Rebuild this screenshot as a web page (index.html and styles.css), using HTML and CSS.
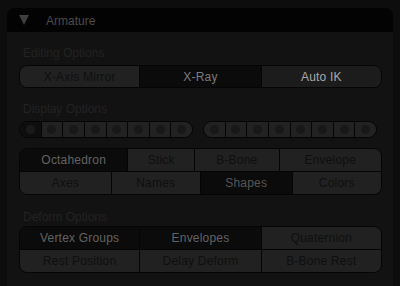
FILE: index.html
```html
<!DOCTYPE html>
<html lang="en">
<head>
    <meta charset="UTF-8">
    <title>Armature</title>
    <link rel="stylesheet" href="styles.css">
</head>
<body>
    <div class="panel">
        <div class="panel-header">
            <span class="tri"></span>
            <span class="title">Armature</span>
        </div>
        <div class="panel-body">
            <div class="label">Editing Options</div>
            <div class="btn-row grp">
                <div class="btn off w120">X-Axis Mirror</div>
                <div class="btn on bright w122">X-Ray</div>
                <div class="btn hot w121">Auto IK</div>
            </div>

            <div class="label">Display Options</div>
            <div class="layers-row">
                <div class="layers">
                    <div class="cell sel"><span class="dot"></span></div>
                    <div class="cell"><span class="dot"></span></div>
                    <div class="cell"><span class="dot"></span></div>
                    <div class="cell"><span class="dot"></span></div>
                    <div class="cell"><span class="dot"></span></div>
                    <div class="cell"><span class="dot"></span></div>
                    <div class="cell"><span class="dot"></span></div>
                    <div class="cell"><span class="dot"></span></div>
                </div>
                <div class="layers">
                    <div class="cell"><span class="dot"></span></div>
                    <div class="cell"><span class="dot"></span></div>
                    <div class="cell"><span class="dot"></span></div>
                    <div class="cell"><span class="dot"></span></div>
                    <div class="cell"><span class="dot"></span></div>
                    <div class="cell"><span class="dot"></span></div>
                    <div class="cell"><span class="dot"></span></div>
                    <div class="cell"><span class="dot"></span></div>
                </div>
            </div>

            <div class="grp block">
                <div class="btn-row">
                    <div class="btn on w108">Octahedron</div>
                    <div class="btn off w67">Stick</div>
                    <div class="btn off w85">B-Bone</div>
                    <div class="btn off w103">Envelope</div>
                </div>
                <div class="btn-row">
                    <div class="btn off w91">Axes</div>
                    <div class="btn off w90">Names</div>
                    <div class="btn on dim w92">Shapes</div>
                    <div class="btn off w90">Colors</div>
                </div>
            </div>

            <div class="label tight">Deform Options</div>
            <div class="grp block">
                <div class="btn-row">
                    <div class="btn on w120">Vertex Groups</div>
                    <div class="btn on w122">Envelopes</div>
                    <div class="btn off w121">Quaternion</div>
                </div>
                <div class="btn-row">
                    <div class="btn off w120">Rest Position</div>
                    <div class="btn off w122">Delay Deform</div>
                    <div class="btn off w121">B-Bone Rest</div>
                </div>
            </div>
        </div>
    </div>
</body>
</html>
```

FILE: styles.css
```css
body {
    margin: 0;
    background-color: #0d0d0d;
    font-family: "Liberation Sans", Arial, sans-serif;
    font-size: 12px;
    height: 286px;
    overflow: hidden;
}
.panel {
    margin: 8px 7px 0 7px;
    height: 278px;
    background-color: #121212;
    border-radius: 8px 8px 0 0;
}
.panel-header {
    height: 24px;
    background-color: #030303;
    border-radius: 8px 8px 0 0;
    display: flex;
    align-items: center;
}
.tri {
    width: 0;
    height: 0;
    margin-left: 12px;
    border-left: 5px solid transparent;
    border-right: 5px solid transparent;
    border-top: 10px solid #3e3e3e;
}
.title {
    margin-left: 17px;
    color: #4a4a4a;
    font-size: 12px;
    padding-top: 2px;
}
.panel-body {
    padding: 0 11px 0 12px;
}
.label {
    color: #222222;
    padding-left: 4px;
    height: 16px;
    line-height: 16px;
    margin-top: 13px;
    margin-bottom: 4px;
}
.label.tight {
    margin-top: 14px;
    margin-bottom: 1px;
}
.grp {
    border-radius: 8px;
    overflow: hidden;
    border: 1px solid #050505;
    width: 363px;
    box-sizing: border-box;
}
.btn-row {
    display: flex;
    height: 22px;
}
.grp.btn-row {
    height: 23px;
}
.block .btn-row + .btn-row {
    border-top: 1px solid #050505;
}
.btn {
    box-sizing: border-box;
    display: flex;
    align-items: center;
    justify-content: center;
    border-left: 1px solid #050505;
    letter-spacing: 0.2px;
}
.btn:first-child {
    border-left: none;
}
.btn.off {
    background-color: #212121;
    color: #0f0f0f;
}
.btn.on {
    background-color: #0b0b0b;
    color: #626262;
}
.btn.on.bright {
    color: #7a7a7a;
}
.btn.on.dim {
    color: #555555;
}
.btn.hot {
    background-color: #1c1c1c;
    color: #a8a8a8;
}
.w67 { width: 67px; }
.w85 { width: 85px; }
.w90 { width: 90px; }
.w91 { width: 91px; }
.w92 { width: 92px; }
.w103 { width: 103px; }
.w108 { width: 108px; }
.w120 { width: 120px; }
.w121 { width: 121px; }
.w122 { width: 122px; }
.layers-row {
    display: flex;
    gap: 10px;
    margin-bottom: 10px;
}
.layers {
    display: flex;
    height: 17px;
    border: 1px solid #050505;
    border-radius: 9px;
    overflow: hidden;
    width: 174px;
    box-sizing: border-box;
}
.cell {
    flex: 1;
    background-color: #222222;
    border-left: 1px solid #050505;
    display: flex;
    align-items: center;
    justify-content: center;
}
.cell:first-child {
    border-left: none;
}
.cell.sel {
    background-color: #0e0e0e;
}
.dot {
    width: 9px;
    height: 9px;
    border-radius: 50%;
    background-color: #181818;
}
.cell.sel .dot {
    background-color: #1a1a1a;
}
.block {
    margin-top: 0;
}
```
